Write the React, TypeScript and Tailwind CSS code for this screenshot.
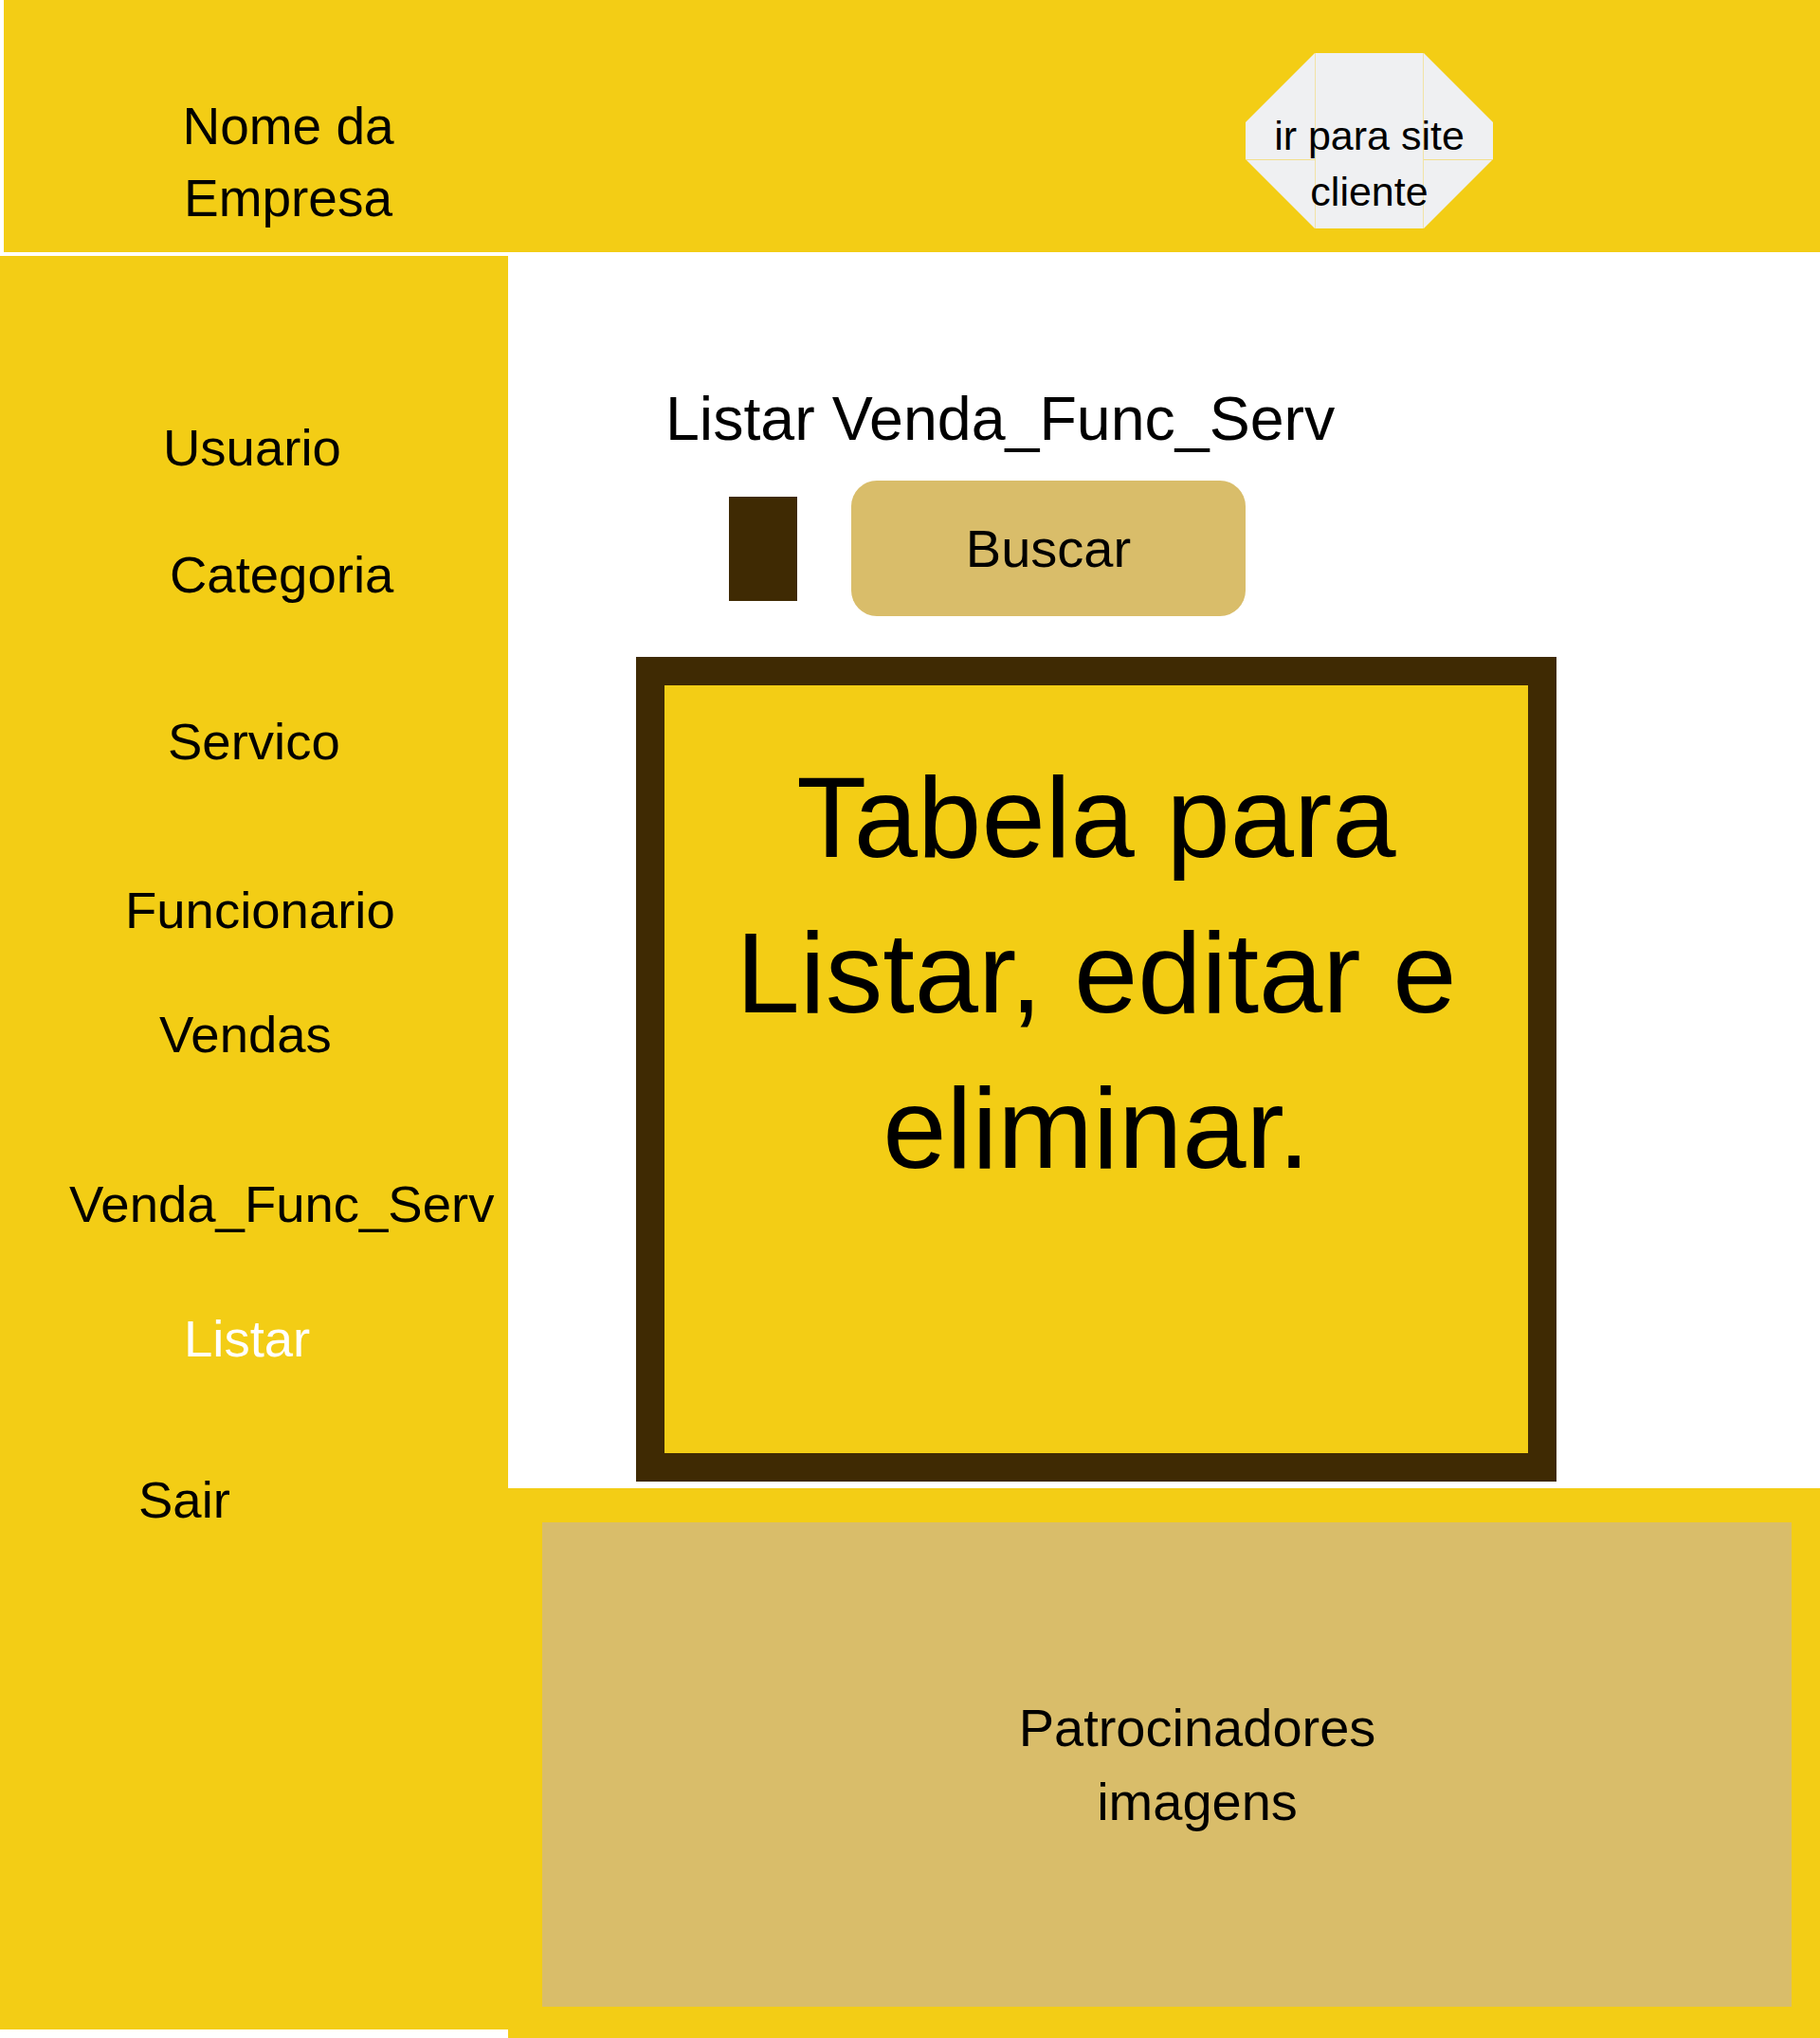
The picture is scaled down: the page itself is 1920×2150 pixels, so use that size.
const menu = [
  { label: 'Usuario', pl: 'pl-[172px]', mt: 'mt-[173px]' },
  { label: 'Categoria', pl: 'pl-[179px]', mt: 'mt-[74px]' },
  { label: 'Servico', pl: 'pl-[177px]', mt: 'mt-[116px]' },
  { label: 'Funcionario', pl: 'pl-[132px]', mt: 'mt-[118px]' },
  { label: 'Vendas', pl: 'pl-[168px]', mt: 'mt-[71px]' },
  { label: 'Venda_Func_Serv', pl: 'pl-[73px]', mt: 'mt-[119px]' },
  { label: 'Listar', pl: 'pl-[194px]', mt: 'mt-[82px]', active: true },
  { label: 'Sair', pl: 'pl-[146px]', mt: 'mt-[110px]' },
]

const SiteButton = () => (
  <button
    type="button"
    className="relative ml-[710px] mt-[56px] h-[185px] w-[261px] shrink-0 text-black"
  >
    {/* forma octogonal do botao */}
    <svg className="absolute inset-0" width="261" height="185" viewBox="0 0 261 185">
      <polygon
        points="73,0 188,0 261,73 261,112 188,185 73,185 0,112 0,73"
        fill="#eff0f2"
      />
      <line x1="73.5" y1="0" x2="73.5" y2="185" stroke="#f3dc72" strokeWidth="1" opacity="0.6" />
      <line x1="187.5" y1="0" x2="187.5" y2="185" stroke="#f3dc72" strokeWidth="1" opacity="0.6" />
      <line x1="0" y1="112.5" x2="73" y2="112.5" stroke="#f3dc72" strokeWidth="1" opacity="0.8" />
      <line x1="188" y1="112.5" x2="261" y2="112.5" stroke="#f3dc72" strokeWidth="1" opacity="0.8" />
    </svg>
    <span className="relative block pt-[49px] text-center text-[43px] leading-[59px]">
      ir para site
      <br />
      cliente
    </span>
  </button>
)

export default function App() {
  return (
    <div className="h-[2150px] w-[1920px] overflow-hidden bg-white font-['Liberation_Sans',Arial,sans-serif] text-black">
      {/* cabecalho */}
      <header className="ml-[4px] flex h-[266px] bg-[#f3cd15]">
        <div className="w-[600px] shrink-0 pt-[95px] text-center text-[55px] leading-[76px]">
          Nome da
          <br />
          Empresa
        </div>
        <SiteButton />
      </header>

      <div className="flex">
        {/* menu lateral */}
        <nav className="mt-[4px] flex h-[1871px] w-[536px] shrink-0 flex-col bg-[#f3cd15]">
          {menu.map((m) => (
            <a
              key={m.label}
              href="#"
              className={`${m.mt} ${m.pl} block text-[54.5px] leading-[60px] whitespace-nowrap ${
                m.active ? 'text-white' : 'text-black'
              }`}
            >
              {m.label}
            </a>
          ))}
        </nav>

        <main className="flex h-[1884px] flex-1 flex-col">
          <h1 className="mt-[139px] pl-[166px] text-[64.5px] leading-[74px] font-normal">
            Listar Venda_Func_Serv
          </h1>

          <div className="mt-[28px] flex h-[143px] items-center pl-[233px]">
            <div className="h-[110px] w-[72px] bg-[#3f2a03]" />
            <button
              type="button"
              className="ml-[57px] h-[143px] w-[416px] rounded-[27px] bg-[#d9bd6a] text-[56px] leading-none text-black"
            >
              Buscar
            </button>
          </div>

          <div className="ml-[135px] mt-[43px] h-[870px] w-[971px] border-[30px] border-[#3f2a03] bg-[#f3cd15]">
            <p className="pt-[57px] text-center text-[121px] leading-[164px]">
              Tabela para
              <br />
              Listar, editar e
              <br />
              eliminar.
            </p>
          </div>

          {/* rodape */}
          <footer className="mt-[7px] flex-1 bg-[#f3cd15] pt-[36px] pr-[30px] pb-[33px] pl-[36px]">
            <div className="flex h-full items-center justify-center bg-[#d9bd6a] pl-[64px] text-center text-[56px] leading-[78px]">
              <p>
                Patrocinadores
                <br />
                imagens
              </p>
            </div>
          </footer>
        </main>
      </div>
    </div>
  )
}
